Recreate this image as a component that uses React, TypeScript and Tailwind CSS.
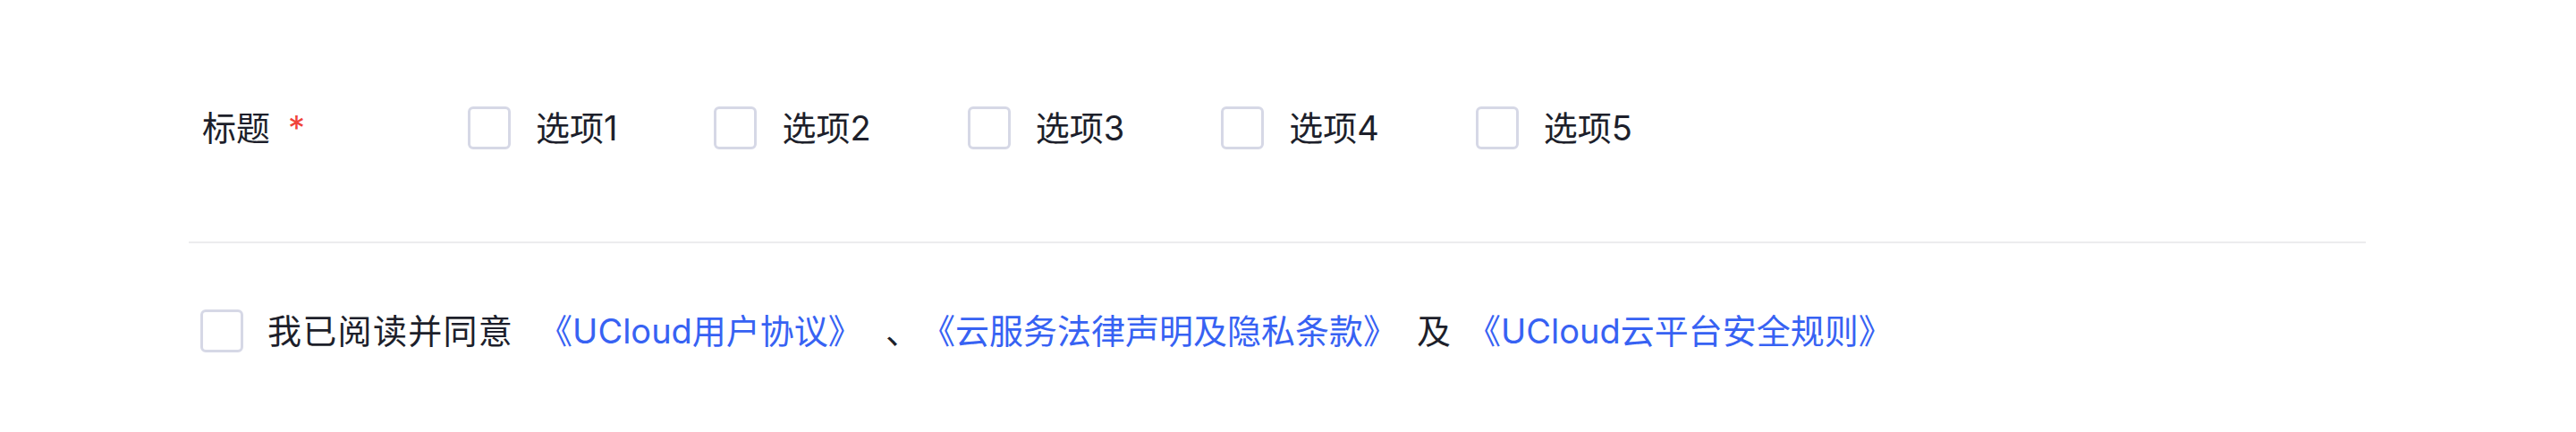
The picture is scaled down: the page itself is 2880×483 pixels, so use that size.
import React from 'react';

const options = ['选项1', '选项2', '选项3', '选项4', '选项5'];

const Box: React.FC = () => (
  <span className="inline-block w-[48px] h-[48px] shrink-0 rounded-[6px] border-[3px] border-[#d6d8e6] bg-white" />
);

export default function App() {
  return (
    <div
      className="w-full h-[483px] bg-white pt-[119px] text-[38px] leading-[48px] text-[#1d1f2b]"
      style={{ fontFamily: 'Inter, "Noto Sans CJK SC", sans-serif' }}
    >
      <div className="ml-[211px] w-[2434px]">
        <div className="flex items-center h-[48px] pl-[15px]">
          <div className="w-[297px] flex items-center">
            <span>标题</span>
            <span className="ml-[20px] text-[#f0433a]">*</span>
          </div>
          <div className="flex items-center">
            {options.map((o) => (
              <label key={o} className="flex items-center mr-[108px]">
                <Box />
                <span className="ml-[28px]">{o}</span>
              </label>
            ))}
          </div>
        </div>

        <div className="mt-[103px] border-t-[2px] border-[#ececee]" />

        <div className="mt-[74px] flex items-center h-[48px] pl-[13px]">
          <Box />
          <span className="ml-[27px] tracking-[1.3px]">我已阅读并同意</span>
          <a className="ml-[28px] text-[#3762f3]">《UCloud用户协议》</a>
          <span className="ml-[26px]">、</span>
          <a className="ml-[2px] text-[#3762f3]">《云服务法律声明及隐私条款》</a>
          <span className="ml-[22px]">及</span>
          <a className="ml-[18px] text-[#3762f3]">《UCloud云平台安全规则》</a>
        </div>
      </div>
    </div>
  );
}
